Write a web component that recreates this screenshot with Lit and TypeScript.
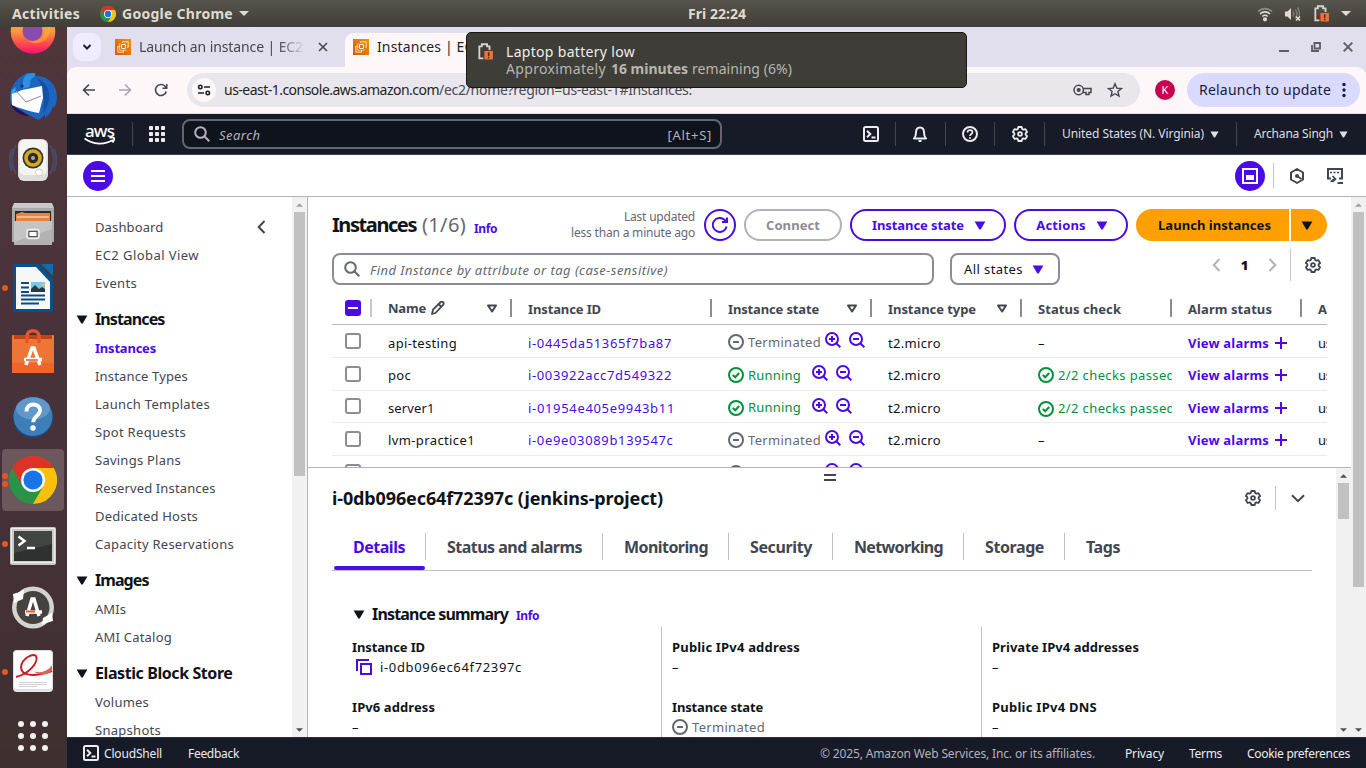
import { LitElement, html, css, svg } from 'lit';
import { customElement, property } from 'lit/decorators.js';

/** Single line of text whose tracking is adjusted so that it spans `w` pixels. */
@customElement('fit-text')
class FitText extends LitElement {
  @property({ type: Number }) w = 0;

  static styles = css`
    :host { display: inline-block; white-space: nowrap; flex: none; }
  `;

  firstUpdated() {
    const inner = this.renderRoot.querySelector('span') as HTMLElement;
    const natural = inner.getBoundingClientRect().width;
    const count = (this.textContent || '').trim().length;
    if (this.w && count) {
      this.style.width = `${this.w}px`;
      this.style.letterSpacing = `${((this.w - natural) / count).toFixed(3)}px`;
    }
  }

  render() {
    return html`<span><slot></slot></span>`;
  }
}

const t = (s: string, w: number, c = '') => html`<fit-text class=${c} .w=${w}>${s}</fit-text>`;

/* ---- shared icons (16-unit grid, 2-unit strokes) ---- */
const ico = (body: unknown, size = 16, cls = 'ic') =>
  html`<svg class=${cls} width=${size} height=${size} viewBox="0 0 16 16" fill="none" stroke="currentColor" stroke-width="2">${body}</svg>`;

const gear = svg`<path d="M6.3 1h3.4l.5 2 1.2.7 2-.6 1.7 2.9-1.5 1.4v1.3l1.5 1.4-1.7 2.9-2-.6-1.2.7-.5 1.9H6.300l-.5-1.9-1.200-.7-2 .6L.9 10.100l1.500-1.400V7.400L.9 6l1.700-2.900 2 .6L5.800 3z" stroke-linejoin="round" stroke-width="1.8"/><circle cx="8" cy="8" r="1.9" stroke-width="1.8"/>`;
const searchIc = svg`<circle cx="6.500" cy="6.500" r="5.300"/><path d="M10.500 10.500 15.300 15.300"/>`;
const zoomPlus = svg`<circle cx="7" cy="7" r="6"/><path d="M11.300 11.300 15.300 15.300M7 4v6M4 7h6"/>`;
const zoomMinus = svg`<circle cx="7" cy="7" r="6"/><path d="M11.300 11.300 15.300 15.300M4 7h6"/>`;
const minusCircle = svg`<circle cx="8" cy="8" r="7"/><path d="M5 8h6"/>`;
const okCircle = svg`<circle cx="8" cy="8" r="7"/><path d="m4.700 8 2.500 2.300 4-4.300"/>`;
const refreshIc = svg`<path d="M14.600 9.500A7 7 0 1 1 12.500 2.800L15 5M15 .5V5h-5"/>`;
const shell = svg`<rect x="1" y="1" width="14" height="14" rx="1.500"/><path d="m4 4.700 3.300 3.300L4 11.300M8.500 11.500h4"/>`;
const bell = svg`<path d="M2 12.500h12c-1.500-1.500-2-3-2-6 0-3-1.500-5-4-5s-4 2-4 5c0 3-.5 4.500-2 6zM6.500 15h3" stroke-linejoin="round"/>`;
const help = svg`<circle cx="8" cy="8" r="7"/><path d="M5.500 6.500c0-1.600 1.100-2.300 2.500-2.300s2.500.8 2.500 2.100c0 1.700-2.500 1.700-2.500 3.700M8 11v1.700" stroke-width="1.700"/>`;
const tri = (w = 12, h = 9, cls = 'tri') =>
  html`<svg class=${cls} width=${w} height=${h} viewBox="0 0 12 9"><path d="M.6.5h10.800L6.700 8.500H5.300z" fill="currentColor"/></svg>`;
const triOpen = html`<svg class="tri" width="12" height="9" viewBox="0 0 12 9"><path d="M2 1.500h8L6.100 7.500z" fill="none" stroke="currentColor" stroke-width="2" stroke-linejoin="round"/></svg>`;
const chromeLogo = (s: number) => html`<svg width=${s} height=${s} viewBox="0 0 48 48">
  <circle cx="24" cy="24" r="24" fill="#2b9348"/>
  <path d="M3.200 12A24 24 0 0 1 44.800 12L24 12.500 13.600 30z" fill="#df3227"/>
  <path d="M44.800 12A24 24 0 0 1 24 48L34.400 30 24 12z" fill="#fcc00c"/>
  <circle cx="24" cy="24" r="12" fill="#fff"/><circle cx="24" cy="24" r="9.600" fill="#1a73e8"/></svg>`;
const ec2Fav = html`<svg width="16" height="16" viewBox="0 0 16 16"><defs><linearGradient id="o" x1="0" y1="1" x2="1" y2="0"><stop offset="0" stop-color="#d05c0c"/><stop offset="1" stop-color="#f59100"/></linearGradient></defs><rect width="16" height="16" fill="url(#o)"/><g fill="none" stroke="#ffe3b8" stroke-width="1"><rect x="6.500" y="5.500" width="4" height="4" rx=".6" stroke="#fff"/><path d="M7.500 4V2.800h5.700v5.400H12M5 7.300H2.800v5.900h5.700V11"/><path d="M5.500 4.800h-.8v6.500h6.500v-.6" opacity=".75"/></g></svg>`;
const batteryIc = (s: number) => html`<svg width=${s} height=${s} viewBox="0 0 16 16"><path d="M6 14.500H2.200V3.200H4.500V1.200h5v2h2.300V6.500" fill="none" stroke="#d5d3cc" stroke-width="1.700"/><circle cx="4.800" cy="11.500" r="1" fill="#d40000"/><rect x="7" y="7.500" width="8" height="8" rx=".6" fill="#f37134"/><path d="M11 8.700v3.500M11 13v1.400" stroke="#5a2b16" stroke-width="1.500"/></svg>`;

/* ---- launcher ---- */
@customElement('launcher-dock')
class LauncherDock extends LitElement {
  static styles = css`
    :host { display: block; width: 67px; height: 741px; overflow: hidden; background: linear-gradient(#4f363b, #46313a 60%, #3f302f); flex: none; }
    .list { display: flex; flex-direction: column; margin-top: -27px; }
    .item { height: 64px; display: flex; align-items: center; }
    .dots { width: 7px; margin-left: -1px; height: 62px; display: flex; flex-direction: column; gap: 2px; justify-content: center; align-items: center; flex: none; }
    .dot { width: 6px; height: 6px; border-radius: 50%; background: #e95420; }
    .tile { width: 62px; height: 62px; margin-left: 2px; border-radius: 4px; display: flex; align-items: center; }
    .on { background: #6b575c; }
    .pic { width: 48px; height: 48px; display: block; margin-left: 1px; }
  `;

  render() {
    const i = (body: unknown, dots = 0) => html`
      <div class="item"><div class="tile">
        <div class="dots">${Array.from({ length: dots }, () => html`<i class="dot"></i>`)}</div>
        <svg class="pic" viewBox="0 0 48 48">${body}</svg>
      </div></div>`;
    return html`<div class="list">
      ${i(svg`<defs><linearGradient id="ff" x1="0" y1="0" x2="0" y2="1"><stop offset=".5" stop-color="#ff9a3c"/><stop offset=".75" stop-color="#ff4f4a"/><stop offset="1" stop-color="#f5106f"/></linearGradient></defs><circle cx="24" cy="23.500" r="22.300" fill="url(#ff)"/><circle cx="23.500" cy="23" r="10" fill="#8a4bb0"/><path d="M38 8c5 9 4 19-2 24-5 4-12 4-17 1 9 1 16-3 17-10z" fill="#ffb02e" opacity=".6"/>`)}
      ${i(svg`<path d="M1 26C1 13 9 6 15 3c3-3 8-3 11 1 12-1 22 8 22 21 0 4-1 8-3 11l-1-2c-1 5-4 9-8 12l0-4c-2 3-4 5-7 6L2 33z" fill="#1c66c2"/><path d="M14 9c1-5 4-8 10-8 3 0 3 2 1 4-5 2-3 7-5 10l-6 2z" fill="#2f8fe0"/><path d="M28 6c9 4 13 12 12 22-1 6-4 10-6 13 2-11 1-25-6-35z" fill="#1450a4"/><path d="M3 18c-2 6-1 9 0 14l4-17z" fill="#39a4ec"/><path d="M2 32l4 3 14 9c-8 0-15-4-18-12z" fill="#24105e"/><path d="M3 22l10-4 20-4 1 12-4 15C22 40 10 36 3 33z" fill="#fff"/><path d="m6 18 11 12 15-6" fill="none" stroke="#8a8a95"/><circle cx="13" cy="14" r="1.500" fill="#0b2a5e"/>`)}
      ${i(svg`<path d="M7 9c-5 9-5 20 0 29M41 9c5 9 5 20 0 29M3 13c-3 7-3 15 0 22M45 13c3 7 3 15 0 22" fill="none" stroke="#4a4a68" stroke-width="2"/><rect x="9" y="3" width="30" height="42" rx="6" fill="#dededc"/><rect x="10.500" y="4" width="27" height="35" rx="5" fill="#f4f4f3"/><circle cx="24" cy="22" r="10.500" fill="#32332f"/><circle cx="24" cy="22" r="8.800" fill="#d5ab1d"/><circle cx="24" cy="22" r="5.200" fill="#2b2b28"/><circle cx="24" cy="22" r="2" fill="#aaa"/><circle cx="30" cy="36.500" r="3.500" fill="#fff" stroke="#ccc"/>`)}
      ${i(svg`<path d="M5 3h38l2 5v34H3V8z" fill="#c9c9c9"/><path d="M3 8h42v34H3z" fill="#a9a9a9"/><rect x="6" y="11" width="36" height="10" fill="#2c2a28"/><path d="M7 14l6-2 3 1h25v8H7z" fill="#e98242"/><path d="M8 17h32" stroke="#fff2d8"/><path d="M5 21h38v24H5z" fill="#b2b2b2"/><path d="M5 21h38v8L5 42z" fill="#c4c4c4"/><rect x="18" y="29.500" width="12" height="9" rx="2" fill="#aaa" stroke="#eee" stroke-width="1.500"/><rect x="20" y="31.500" width="8" height="5" fill="#fff" stroke="#555"/>`)}
      ${i(svg`<path d="M6 0h24l14 15v31a2 2 0 0 1-2 2H6a2 2 0 0 1-2-2V2a2 2 0 0 1 2-2z" fill="#06508c"/><path d="M32 0h12v12z" fill="#0c6cad"/><path d="M7 3h20l14 15v27H7z" fill="#f7f7f5"/><path d="M12 19h8M12 23.500h8M12 28h8M12 31.500h24M12 35.500h24M12 39.500h18" stroke="#0a4d86" stroke-width="2"/><rect x="22" y="18" width="14" height="10" fill="#78c4f5"/><path d="M22 28v-3l4-4 4 4 3-2 3 2v3z" fill="#2a3b3f"/><circle cx="34" cy="20.500" r="1.600" fill="#ffc81c"/>`, 1)}
      ${i(svg`<rect x="3" y="7" width="42" height="38" rx="1" fill="#f07a3c"/><path d="M5 7h38v5H5z" fill="#c24317"/><path d="M3 11h42v24H3z" fill="#ee7536"/><path d="M3 35h42v10H3z" fill="#f0662a"/><path d="M18 15V8c0-7 12-7 12 0v7" fill="none" stroke="#e9552a" stroke-width="3.500"/><path d="M17 37l6-17h2l6 17M15 31.500h18" stroke="#fff" stroke-width="3.500" fill="none"/><path d="M17 32h12" stroke="#e95420" stroke-width="1.500"/>`)}
      ${i(svg`<circle cx="24" cy="25.500" r="20" fill="#1c4a80"/><circle cx="24" cy="24.500" r="19.500" fill="#3d7db8"/><ellipse cx="24" cy="16.500" rx="17" ry="11" fill="#6098ca"/><path d="M17.500 19.500c0-5 3-7 6.700-7 4 0 6.800 2.300 6.800 5.700 0 5.300-6.800 6-6.800 12" fill="none" stroke="#fff" stroke-width="3.800"/><circle cx="24" cy="36" r="2.700" fill="#fff"/>`)}
      <div class="item"><div class="tile on"><div class="dots"><i class="dot"></i><i class="dot"></i></div><div class="pic">${chromeLogo(48)}</div></div></div>
      ${i(svg`<rect x="1" y="7" width="46" height="38" rx="2" fill="#c9c9c7"/><rect x="2.500" y="8.500" width="43" height="34" fill="none" stroke="#efefed"/><rect x="5" y="11" width="38" height="30" fill="#2e3130"/><path d="M5 11h38v13L5 33z" fill="#414544"/><path d="m9.500 16.500 6 4.500-6 4.500M18 28h8" fill="none" stroke="#fff" stroke-width="2.500"/>`, 1)}
      ${i(svg`<circle cx="24" cy="23.500" r="21" fill="#d5d3cf"/><circle cx="24" cy="23.500" r="16.500" fill="#45423f"/><path d="M11 6l4 2-1 3 9-2-9 8-8 1-2-4z" fill="#45423f" opacity="0"/><path d="M4 10l7-2 4-2-1 9-9 4z" fill="#fff"/><path d="M44 37l-7 2-4 2 1-7 9-5z" fill="#fff"/><path d="M18 32l5-17h2l5 17M16 28h17" stroke="#fff" stroke-width="3.500" fill="none"/><path d="M17 27.500h9" stroke="#f05a20" stroke-width="2"/>`)}
      ${i(svg`<rect x="4" y="2" width="40" height="42" rx="4" fill="#e4e4e3"/><rect x="4.500" y="2.500" width="39" height="39" rx="3.500" fill="#fff" stroke="#ddd"/><path d="M7 29C20 26 30 14 27 8 24 5 13 10 12 19c0 8 10 11 31 4" fill="none" stroke="#cc1d25" stroke-width="2"/><path d="M25 23.500c7 2 13 0 18-6v5c-6 5-13 5-18 1z" fill="#e0605c"/><path d="M10 34.500h28M10 36.500h28M10 38.500h18" stroke="#cfcfcf"/>`, 1)}
      ${i(svg`${[12, 24, 36].map(y => [12, 24, 36].map(x => svg`<circle cx=${x} cy=${y} r="3" fill="#f2f1f0"/>`))}`)}
    </div>`;
  }
}

/* ---- browser chrome ---- */
@customElement('browser-top')
class BrowserTop extends LitElement {
  static styles = css`
    :host { display: block; width: 1299px; height: 87px; background: #e1dfed; color: #1f1f24; font: 14px/20px 'Noto Sans', sans-serif; flex: none; }
    svg { flex: none; }
    .tabs { height: 40px; display: flex; align-items: center; }
    .drop { width: 28px; height: 28px; border-radius: 9px; background: #eeecfe; margin-left: 6px; display: flex; align-items: center; justify-content: center; }
    .tab1 { display: flex; align-items: center; margin-left: 14px; width: 227px; gap: 8px; color: #47464f; flex: none; }
    .fade { width: 166px; overflow: hidden; white-space: nowrap; -webkit-mask-image: linear-gradient(90deg, #000 84%, transparent); mask-image: linear-gradient(90deg, #000 84%, transparent); }
    .tab1 svg:last-child { margin-left: 5px; }
    .tab2 { align-self: flex-end; height: 34px; width: 240px; background: #fdf7f9; border-radius: 9px 9px 0 0; margin-left: 3px; padding: 0 0 6px 8px; display: flex; align-items: center; gap: 8px; box-sizing: border-box; white-space: nowrap; overflow: hidden; }
    .grow { flex: 1; }
    .wins { display: flex; color: #5c5b66; gap: 22px; margin-right: 13px; align-items: center; }
    .bar { height: 47px; background: #fdf7f9; border-radius: 9px 9px 0 0; border-bottom: 1px solid #dfdce3; box-sizing: border-box; display: flex; align-items: center; }
    .nav { display: flex; gap: 20px; margin-left: 14px; color: #47464f; }
    .url { width: 953px; height: 34px; border-radius: 17px; background: #e9e7ec; margin-left: 18px; display: flex; align-items: center; box-sizing: border-box; padding: 0 17px 0 5px; color: #4b4a54; }
    .site { width: 24px; height: 24px; border-radius: 50%; background: #fdf7f9; margin-right: 8px; display: flex; align-items: center; justify-content: center; }
    .dark { color: #1f1f24; }
    .mid { margin-right: 15px; }
    .av { width: 20px; height: 20px; border-radius: 50%; background: #c9004f; color: #fff; font-size: 11px; text-align: center; margin-left: 15px; }
    .re { width: 173px; height: 34px; border-radius: 17px; background: #dadaff; margin-left: 12px; box-sizing: border-box; padding-left: 12px; display: flex; align-items: center; color: #1b1a3a; gap: 11px; }
  `;

  render() {
    return html`
      <div class="tabs">
        <div class="drop"><svg width="10" height="8" viewBox="0 0 10 8"><path d="m1.500 2 3.500 3.500L8.500 2" fill="none" stroke="#1f1f24" stroke-width="2"/></svg></div>
        <div class="tab1">${ec2Fav}<div class="fade">${t('Launch an instance | EC2', 164)}</div>
          <svg width="10" height="10" viewBox="0 0 10 10"><path d="m1 1 8 8M9 1 1 9" stroke="#47464f" stroke-width="1.600"/></svg></div>
        <div class="tab2">${ec2Fav}${t('Instances | EC2 | us-east-1', 181)}</div>
        <div class="grow"></div>
        <div class="wins">
          <svg width="10" height="12" viewBox="0 0 10 12"><path d="M0 10h10" stroke="currentColor" stroke-width="2"/></svg>
          <svg width="10" height="10" viewBox="0 0 10 10" fill="none" stroke="currentColor" stroke-width="1.800"><path d="M3.500 1h5.500v5.500H3.500zM1 3v6h7"/></svg>
          <svg width="10" height="10" viewBox="0 0 10 10"><path d="m.7.7 8.600 8.600M9.300.7.7 9.300" stroke="currentColor" stroke-width="1.900"/></svg>
        </div>
      </div>
      <div class="bar">
        <div class="nav">
          <svg width="16" height="16" viewBox="0 0 16 16" fill="none" stroke="currentColor" stroke-width="1.600"><path d="M14 8H3M8 2.500 2.500 8 8 13.500"/></svg>
          <svg width="16" height="16" viewBox="0 0 16 16" fill="none" stroke="#a9a6b0" stroke-width="1.600"><path d="M2 8h11M8 2.500 13.500 8 8 13.500"/></svg>
          <svg width="16" height="16" viewBox="0 0 16 16" fill="none" stroke="currentColor" stroke-width="1.600"><path d="M13.300 9.500A5.500 5.500 0 1 1 12 4.200L13.700 6M13.700 2v4.300H9.500"/></svg>
        </div>
        <div class="url">
          <div class="site"><svg width="14" height="12" viewBox="0 0 14 12" fill="none" stroke="#1f1f24" stroke-width="1.600"><circle cx="3.300" cy="3" r="1.700"/><path d="M7 3h6M1 9h6"/><circle cx="10.800" cy="9" r="1.700"/></svg></div>
          ${t('us-east-1.console.aws.amazon.com', 215, 'dark')}${t('/ec2/home?region=us-east-1#Instances:', 253)}
          <div class="grow"></div>
          <svg class="mid" width="19" height="12" viewBox="0 0 19 12" fill="none" stroke="#47464f" stroke-width="1.500"><circle cx="5.700" cy="6" r="4.700"/><circle cx="5.700" cy="6" r="1.300" fill="#47464f"/><path d="M10.200 4.500H18v4h-2v2h-3v-2h-3"/></svg>
          <svg width="16" height="16" viewBox="0 0 16 16"><path d="m8 1.800 1.800 4.300 4.700.4-3.600 3 1.100 4.600L8 11.700l-4 2.400 1.100-4.600-3.600-3 4.700-.4z" fill="none" stroke="#47464f" stroke-width="1.400"/></svg>
        </div>
        <div class="av">K</div>
        <div class="re">${t('Relaunch to update', 132)}<svg width="4" height="16" viewBox="0 0 4 16" fill="#1b1a3a"><circle cx="2" cy="2.500" r="1.700"/><circle cx="2" cy="8" r="1.700"/><circle cx="2" cy="13.500" r="1.700"/></svg></div>
      </div>`;
  }
}

/* ---- AWS header + tool strip ---- */
@customElement('aws-header')
class AwsHeader extends LitElement {
  static styles = css`
    :host { display: block; flex: none; font: 12px/20px 'Noto Sans', sans-serif; }
    svg { display: block; flex: none; }
    .top { height: 41px; box-sizing: border-box; border-bottom: 1px solid #424453; background: #161b27; display: flex; align-items: center; color: #ebebf0; padding-left: 16px; }
    .logo { width: 33px; display: flex; flex-direction: column; align-items: center; }
    .word { font-size: 17px; line-height: 13px; font-weight: 500; color: #fff; }
    .v { width: 1px; height: 24px; background: #424453; flex: none; }
    .v1 { margin: 0 16px; }
    .find { width: 540px; height: 30px; box-sizing: border-box; border: 2px solid #656471; border-radius: 8px; background: #0f131b; margin-left: 17px; display: flex; align-items: center; padding: 1px 8px 0 10px; color: #b4b1bd; font-size: 13px; flex: none; }
    .find i { margin-left: 9px; }
    .find svg { margin-top: -1px; }
    .grow { flex: 1; }
    .cell { width: 48.700px; display: flex; justify-content: center; flex: none; }
    .c1 { margin-left: 124.300px; }
    .link { display: flex; align-items: center; gap: 6px; margin-left: 17px; color: #dedee3; }
    .sep { margin-left: 17px; }
    .strip { height: 42px; box-sizing: border-box; border-bottom: 1px solid #b5b2be; background: #fff; display: flex; align-items: center; padding-left: 16px; color: #424453; }
    .round { width: 30px; height: 30px; border-radius: 50%; background: #4a0be6; display: flex; align-items: center; justify-content: center; color: #fff; }
    .v2 { width: 1px; height: 25px; background: #c4c2cc; margin: 0 15px 0 8px; }
    .hex { margin-right: 22px; }
    .term { margin-right: 23px; }
  `;

  render() {
    return html`
      <div class="top">
        <div class="logo">${t('aws', 29, 'word')}
          <svg width="33" height="8" viewBox="0 0 33 8"><path d="M1.500 1.500c9 6.500 20 6.500 28.500 1.500M26.500 1c2-.7 4-.7 4.500 0s-.3 3-1.500 4.500" fill="none" stroke="#fff" stroke-width="1.700"/></svg></div>
        <div class="v v1"></div>
        <svg width="16" height="16" viewBox="0 0 16 16" fill="currentColor">${[0, 6, 12].map(y => [0, 6, 12].map(x => svg`<rect x=${x} y=${y} width="4" height="4" rx=".7"/>`))}</svg>
        <div class="find">${ico(searchIc)}<i>${t('Search', 41.5)}</i><div class="grow"></div>${t('[Alt+S]', 44.5)}</div>
        <div class="cell c1">${ico(shell)}</div><div class="v"></div>
        <div class="cell">${ico(bell)}</div><div class="v"></div>
        <div class="cell">${ico(help)}</div><div class="v"></div>
        <div class="cell">${ico(gear)}</div><div class="v"></div>
        <div class="link">${t('United States (N. Virginia)', 142)}${tri(9, 7)}</div>
        <div class="v sep"></div>
        <div class="link">${t('Archana Singh', 79)}${tri(9, 7)}</div>
      </div>
      <div class="strip">
        <div class="round"><svg width="14" height="12" viewBox="0 0 14 12"><path d="M0 1h14M0 6h14M0 11h14" stroke="#fff" stroke-width="2"/></svg></div>
        <div class="grow"></div>
        <div class="round">${ico(svg`<rect x="1" y="1" width="14" height="14"/><rect x="4" y="7" width="8" height="5" fill="currentColor" stroke="none"/>`)}</div>
        <div class="v2"></div>
        <svg class="hex" width="16" height="16" viewBox="0 0 16 16" fill="none" stroke="currentColor" stroke-width="2"><path d="m8 1 6 3.500v7L8 15l-6-3.500v-7z" stroke-linejoin="round"/><path d="M8 8l4.500 3" stroke-width="1.700"/><circle cx="8" cy="8" r="2" fill="currentColor" stroke="none"/></svg>
        <svg class="term" width="16" height="16" viewBox="0 0 16 16" fill="none" stroke="currentColor" stroke-width="2"><path d="M4 10.500H1V1h14v9.500h-3"/><path d="M3 4.500h2M6.500 4.500h2M10 4.500h2" stroke-width="1.700"/><path d="M3.500 13.500C5.500 13.500 5 11 8 11M5.500 8 8.500 11 5.500 14" stroke-width="1.700"/><path d="M10.500 15H16"/></svg>
      </div>`;
  }
}

/* ---- sidebar ---- */
@customElement('side-nav')
class SideNav extends LitElement {
  static styles = css`
    :host { display: flex; width: 241px; box-sizing: border-box; border-right: 1px solid #b5b2be; background: #fff; overflow: hidden; flex: none; font: 13px/20px 'Noto Sans', sans-serif; color: #424650; }
    .list { flex: 1; padding-top: 16px; }
    .row { height: 28px; display: flex; align-items: center; padding-left: 28px; }
    .head { height: 30px; padding-top: 7px; display: flex; align-items: center; padding-left: 9px; gap: 7px; color: #0f141a; font-size: 16px; font-weight: 700; }
    .on { color: #4a0be6; font-weight: 700; }
    .chev { margin-left: auto; margin-right: 26px; }
  `;

  render() {
    const r = (s: string, w: number, on = false) => html`<div class="row ${on ? 'on' : ''}">${t(s, w)}</div>`;
    const h = (s: string, w: number) => html`<div class="head">${tri(12, 9)}${t(s, w)}</div>`;
    return html`<div class="list">
        <div class="row">${t('Dashboard', 68.5)}<svg class="chev" width="9" height="14" viewBox="0 0 9 14"><path d="M7.500 1 1.700 7l5.800 6" fill="none" stroke="#424453" stroke-width="2"/></svg></div>
        ${r('EC2 Global View', 104)}${r('Events', 42)}
        ${h('Instances', 69.5)}
        ${r('Instances', 61, true)}${r('Instance Types', 93)}${r('Launch Templates', 115)}${r('Spot Requests', 91)}${r('Savings Plans', 86)}${r('Reserved Instances', 120.5)}${r('Dedicated Hosts', 103)}${r('Capacity Reservations', 139)}
        ${h('Images', 53.5)}${r('AMIs', 31)}${r('AMI Catalog', 77)}
        ${h('Elastic Block Store', 137.5)}${r('Volumes', 54)}${r('Snapshots', 66)}
      </div><scroll-bar .thumb=${264} .up=${'#a3a3a3'} .down=${'#505050'}></scroll-bar>`;
  }
}

@customElement('scroll-bar')
class ScrollBar extends LitElement {
  @property({ type: Number }) thumb = 100;
  @property() up = '#a3a3a3';
  @property() down = '#505050';

  static styles = css`
    :host { display: flex; flex-direction: column; width: 15px; background: #f1f1f1; align-items: center; flex: none; overflow: hidden; }
    .end { height: 15px; flex: none; display: flex; align-items: center; }
    .thumb { width: 11px; background: #c1c1c1; flex: none; }
    .grow { flex: 1; }
  `;

  render() {
    return html`
      <div class="end"><svg width="7" height="4" viewBox="0 0 8 4"><path d="M0 4 4 0l4 4z" fill=${this.up}/></svg></div>
      <div class="thumb" style="height:${this.thumb}px"></div><div class="grow"></div>
      <div class="end"><svg width="7" height="4" viewBox="0 0 8 4"><path d="M0 0h8L4 4z" fill=${this.down}/></svg></div>`;
  }
}

/* ---- instances table ---- */
@customElement('instances-pane')
class InstancesPane extends LitElement {
  static styles = css`
    :host { display: block; height: 270px; overflow: hidden; padding: 12px 24px 0; box-sizing: border-box; background: #fff; flex: none; font: 13px/20px 'Noto Sans', sans-serif; color: #0f141a; }
    svg { display: block; flex: none; }
    .bar { display: flex; height: 32px; align-items: center; width: 995px; }
    .h1 { font-size: 20px; font-weight: 700; }
    .n { font-size: 20px; color: #656871; margin-left: 6px; }
    .info { font-size: 12px; font-weight: 700; color: #4a0be6; margin: 7px 0 0 8px; }
    .upd { margin-left: auto; font-size: 12px; line-height: 16px; color: #656871; display: flex; flex-direction: column; align-items: flex-end; margin-right: 9px; }
    .btn { height: 32px; box-sizing: border-box; border: 2px solid #4a0be6; border-radius: 16px; color: #4a0be6; font-weight: 700; display: flex; align-items: center; justify-content: center; gap: 10px; margin-right: 8px; }
    .ref { width: 32px; }
    .con { width: 98px; border-color: #b4b1bb; color: #8c8c94; }
    .sta { width: 156px; padding-left: 2px; }
    .act { width: 114px; padding-left: 2px; }
    .launch { width: 153px; border: 0; border-radius: 16px 0 0 16px; background: #ffa000; color: #0f141a; margin-right: 2px; padding-left: 4px; }
    .more { width: 36px; border: 0; border-radius: 0 16px 16px 0; background: #ffa000; color: #0f141a; margin-right: 0; padding-right: 4px; }
    .tools { margin-top: 12px; }
    .find { width: 602px; height: 32px; box-sizing: border-box; border: 2px solid #8c8c94; border-radius: 8px; display: flex; align-items: center; padding-left: 10px; gap: 10px; color: #656871; font-style: italic; }
    .find fit-text { margin-top: 2px; }
    .sel { width: 110px; height: 32px; box-sizing: border-box; border: 2px solid #8c8c94; border-radius: 8px; margin-left: 16px; display: flex; align-items: center; gap: 9px; padding-left: 12px; }
    .sel .tri { color: #4a0be6; }
    .pg { margin-left: auto; display: flex; align-items: center; align-self: flex-start; height: 32px; margin-top: -4px; font-weight: 700; }
    .pg b { width: 47px; text-align: center; }
    .pv { width: 1px; height: 32px; background: #c6c6cd; margin: 0 14px 0 13px; }
    .pg .gear { margin-right: 6px; color: #424453; }
    .table { width: 995px; overflow: hidden; margin-top: 7px; }
    .row, .thead { display: grid; grid-template-columns: 40px 140px 200px 160px 150px 150px 130px 25px; width: 995px; box-sizing: border-box; }
    .thead { height: 33px; border-bottom: 1px solid #b9b8c2; color: #424650; font-weight: 700; align-items: center; }
    .th { height: 18px; border-right: 2px solid #8c8c94; display: flex; align-items: center; padding-left: 16px; overflow: hidden; }
    .th fit-text { margin-top: 2px; }
    .th .tri { margin-left: auto; margin-right: 12px; margin-top: 1px; }
    .th.name fit-text { margin-top: 0; }
    .th.box { padding-left: 13px; border-color: #c6c6cd; }
    .th.last { border: 0; }
    .pen { margin-left: 5px; }
    .row { height: 33px; border-bottom: 1px solid #ebebf0; }
    .row.short { height: 32px; }
    .td { display: flex; align-items: center; padding-left: 16px; overflow: hidden; padding-top: 3px; }
    .even .td { padding-top: 1px; }
    .row .td.sq { padding-left: 13px; padding-top: 0; }
    .short .cb { margin-top: -2px; }
    .cb { width: 12px; height: 12px; border: 2px solid #8c8c94; border-radius: 3px; }
    .id { color: #4a0be6; }
    .row .st { padding-top: 1px; }
    .st fit-text, .ok fit-text { margin-left: 4px; }
    .term { color: #656871; }
    .run { color: #00913a; }
    .term svg, .run svg { margin-top: 1px; }
    .z { color: #4a0be6; display: flex; gap: 8px; margin: -3px 0 0 4px; }
    .zr { margin-left: 11px; }
    .grp { display: flex; align-items: center; }
    .va { color: #4a0be6; font-weight: 700; gap: 6px; }
    .mb { width: 16px; height: 16px; border-radius: 3px; background: #4a0be6; display: flex; align-items: center; justify-content: center; }
    .mb i { width: 10px; height: 2px; background: #fff; }
  `;

  rows: [string, number, string, number, boolean][] = [
    ['api-testing', 69, 'i-0445da51365f7ba87', 144, false],
    ['poc', 23, 'i-003922acc7d549322', 144, true],
    ['server1', 46.5, 'i-01954e405e9943b11', 147, true],
    ['lvm-practice1', 87, 'i-0e9e03089b139547c', 145.5, false],
    ['jenkins-project', 95, 'i-0db096ec64f72397c', 142, false],
  ];

  render() {
    return html`
      <div class="bar">
        ${t('Instances', 84, 'h1')}${t('(1/6)', 44, 'n')}${t('Info', 23, 'info')}
        <div class="upd">${t('Last updated', 71)}${t('less than a minute ago', 124)}</div>
        <div class="btn ref">${ico(refreshIc)}</div>
        <div class="btn con">${t('Connect', 54)}</div>
        <div class="btn sta">${t('Instance state', 92)}${tri()}</div>
        <div class="btn act">${t('Actions', 49.5)}${tri()}</div>
        <div class="btn launch">${t('Launch instances', 113)}</div>
        <div class="btn more">${tri()}</div>
      </div>
      <div class="bar tools">
        <div class="find">${ico(searchIc)}${t('Find Instance by attribute or tag (case-sensitive)', 298)}</div>
        <div class="sel">${t('All states', 59)}${tri()}</div>
        <div class="pg">
          <svg width="9" height="14" viewBox="0 0 9 14"><path d="M7.500 1 1.700 7l5.800 6" fill="none" stroke="#b4b1bb" stroke-width="2"/></svg>
          <b>1</b>
          <svg width="9" height="14" viewBox="0 0 9 14"><path d="m1.500 1 5.800 6-5.800 6" fill="none" stroke="#b4b1bb" stroke-width="2"/></svg>
          <div class="pv"></div><div class="gear">${ico(gear)}</div>
        </div>
      </div>
      <div class="table">
        <div class="thead">
          <div class="th box"><div class="mb"><i></i></div></div>
          <div class="th name">${t('Name', 38)}<svg class="pen" width="14" height="14" viewBox="0 0 14 14"><path d="M1 13l1-4.300L9.700 1a1.500 1.500 0 0 1 2 0l.6.6a1.500 1.500 0 0 1 0 2L4.500 12zM7.700 3.200l2.800 2.800" fill="none" stroke="currentColor" stroke-width="1.800" stroke-linejoin="round"/></svg>${triOpen}</div>
          <div class="th">${t('Instance ID', 73)}</div>
          <div class="th">${t('Instance state', 91)}${triOpen}</div>
          <div class="th">${t('Instance type', 88)}${triOpen}</div>
          <div class="th">${t('Status check', 83)}</div>
          <div class="th">${t('Alarm status', 84)}</div>
          <div class="th last">${t('Availability Zone', 115)}</div>
        </div>
        ${this.rows.map(([n, nw, id, iw, run], k) => html`
          <div class="row ${k === 2 ? 'short' : ''} ${k % 2 ? 'even' : ''}">
            <div class="td sq"><div class="cb"></div></div>
            <div class="td">${t(n, nw)}</div>
            <div class="td id">${t(id, iw)}</div>
            <div class="td st"><div class="grp ${run ? 'run' : 'term'}">${ico(run ? okCircle : minusCircle)}${run ? t('Running', 53) : t('Terminated', 73)}</div><div class="z ${run ? 'zr' : ''}">${ico(zoomPlus)}${ico(zoomMinus)}</div></div>
            <div class="td">${t('t2.micro', 53)}</div>
            <div class="td ok ${run ? 'run' : ''}">${run ? html`${ico(okCircle)}${t('2/2 checks passed', 117)}` : '–'}</div>
            <div class="td va">${t('View alarms', 81)}<svg width="12" height="12" viewBox="0 0 12 12"><path d="M6 0v12M0 6h12" stroke="currentColor" stroke-width="2"/></svg></div>
            <div class="td">${t('us-east-1b', 60)}</div>
          </div>`)}
      </div>`;
  }
}

/* ---- split panel ---- */
@customElement('detail-panel')
class DetailPanel extends LitElement {
  static styles = css`
    :host { display: flex; flex: 1; min-height: 0; border-top: 1px solid #b5b2be; background: #fff; font: 13px/20px 'Noto Sans', sans-serif; color: #0f141a; overflow: hidden; }
    svg { display: block; flex: none; }
    .body { width: 1028px; box-sizing: border-box; padding-left: 24px; }
    .grip { width: 12px; border: solid #424453; border-width: 2px 0; box-sizing: border-box; margin: 6px 0 0 492px; height: 7px; }
    .top { display: flex; align-items: center; height: 24px; margin-top: 5px; }
    .title { font-size: 18px; font-weight: 700; }
    .acts { margin-left: auto; display: flex; align-items: center; color: #424453; margin-right: 31px; }
    .v { width: 1px; height: 24px; background: #c6c6cd; margin: 0 15px 0 14px; }
    .tabs { display: flex; width: 980px; border-bottom: 1px solid #c0bfc9; height: 46px; margin-top: 15px; align-items: flex-start; padding-top: 8px; box-sizing: border-box; font-size: 16px; font-weight: 700; color: #424650; }
    .tab { height: 27px; display: flex; align-items: center; padding: 0 20px 0 21px; border-right: 1px solid #c0bfc9; }
    .tab:last-child { border: 0; }
    .first { margin-left: 2px; flex-direction: column; align-items: stretch; border: 0; padding: 0; color: #4a0be6; height: 38px; }
    .first .lab { border-right: 1px solid #c0bfc9; height: 27px; padding: 0 20px 0 19px; display: flex; align-items: center; }
    .line { height: 4px; width: 91px; background: #4a0be6; border-radius: 2px; margin-top: 6px; }
    .sum { display: flex; align-items: center; height: 24px; margin: 31px 0 0 21px; font-size: 16px; font-weight: 700; gap: 7px; }
    .info { font-size: 12px; color: #4a0be6; margin: 3px 0 0 1px; }
    .cols { display: flex; margin: 1px 0 0 20px; height: 120px; }
    .col { width: 309px; padding-top: 10px; border-right: 1px solid #c0bfc9; box-sizing: content-box; flex: none; }
    .col + .col { padding-left: 10px; }
    .col:last-child { border: 0; }
    .k { font-weight: 700; height: 20px; }
    .val { height: 20px; margin-bottom: 20px; display: flex; align-items: center; }
    .copy { color: #4a0be6; margin: 0 8px 0 4px; }
    .gr { color: #656871; gap: 4px; }
  `;

  render() {
    const tab = (s: string, w: number) => html`<div class="tab">${t(s, w)}</div>`;
    const dash = html`<div class="val">–</div>`;
    return html`
      <div class="body">
        <div class="grip"></div>
        <div class="top">${t('i-0db096ec64f72397c (jenkins-project)', 331, 'title')}
          <div class="acts">${ico(gear)}<div class="v"></div><svg width="14" height="9" viewBox="0 0 14 9"><path d="m1 1.200 6 6 6-6" fill="none" stroke="currentColor" stroke-width="2"/></svg></div>
        </div>
        <div class="tabs">
          <div class="tab first"><div class="lab">${t('Details', 52)}</div><div class="line"></div></div>
          ${tab('Status and alarms', 135)}${tab('Monitoring', 84)}${tab('Security', 62)}${tab('Networking', 89)}${tab('Storage', 59)}${tab('Tags', 34)}
        </div>
        <div class="sum">${tri(12, 9)}${t('Instance summary', 136)}${t('Info', 23, 'info')}</div>
        <div class="cols">
          <div class="col"><div class="k">${t('Instance ID', 73)}</div>
            <div class="val"><svg class="copy" width="16" height="16" viewBox="0 0 16 16" fill="none" stroke="currentColor" stroke-width="2"><path d="M1 12V1h12M5 5h10v10H5z"/></svg>${t('i-0db096ec64f72397c', 142)}</div>
            <div class="k">${t('IPv6 address', 83)}</div>${dash}</div>
          <div class="col"><div class="k">${t('Public IPv4 address', 128)}</div>${dash}
            <div class="k">${t('Instance state', 91)}</div><div class="val gr">${ico(minusCircle)}${t('Terminated', 73)}</div></div>
          <div class="col"><div class="k">${t('Private IPv4 addresses', 147)}</div>${dash}
            <div class="k">${t('Public IPv4 DNS', 105)}</div>${dash}</div>
        </div>
      </div>
      <scroll-bar .thumb=${36} .up=${'#505050'} .down=${'#505050'}></scroll-bar>`;
  }
}

/* ---- desktop ---- */
@customElement('app-root')
class AppRoot extends LitElement {
  static styles = css`
    :host { display: block; width: 1366px; height: 768px; overflow: hidden; position: relative; font-family: 'Noto Sans', sans-serif; background: #fff; }
    svg { display: block; flex: none; }
    .gnome { height: 27px; background: linear-gradient(#57544c, #403e38); color: #dfdbd2; font: bold 14px/27px 'Noto Sans', sans-serif; display: grid; grid-template-columns: 688px 58px 1fr; }
    .left, .right { display: flex; align-items: center; }
    .left { padding-left: 12px; }
    .left > svg { margin: 0 6px 0 20px; }
    .left > .tri { margin: 0 0 0 6px; }
    .right { justify-content: flex-end; padding-right: 15px; gap: 11px; }
    .desk { display: flex; height: 741px; }
    .win { display: flex; flex-direction: column; width: 1299px; }
    .page { display: flex; height: 540px; }
    .main { display: flex; flex-direction: column; width: 1043px; min-height: 0; }
    .foot { height: 31px; background: #161b27; color: #ebebf0; font-size: 12px; display: flex; align-items: center; padding: 0 16px; box-sizing: border-box; border-top: 1px solid #2a303d; }
    .foot .cs { margin: 0 26px 0 5px; }
    .foot .copy { margin-left: auto; color: #b4b1bd; margin-right: 30px; }
    .foot .p { margin-right: 25px; }
    .foot .tm { margin-right: 25px; }
    .note { position: absolute; left: 466px; top: 32px; width: 501px; height: 56px; box-sizing: border-box; background: #3f3d38; border: 1px solid #191916; border-radius: 5px; color: #eeeeec; font-size: 14px; line-height: 17px; display: flex; padding: 10px 0 0 10px; gap: 12px; }
    .sub { color: #b9b6ad; display: flex; }
    .bd { font-weight: 700; margin: 0 4px 0 5px; }
  `;

  render() {
    return html`
      <div class="gnome">
        <div class="left">${t('Activities', 68)}${chromeLogo(16)}${t('Google Chrome', 111)}<svg class="tri" width="10" height="5" viewBox="0 0 10 5"><path d="M0 0h10L5 5z" fill="#dfdbd2"/></svg></div>
        <div>${t('Fri 22:24', 58)}</div>
        <div class="right">
          <svg width="16" height="16" viewBox="0 0 16 16" fill="none" stroke="#dfdbd2" stroke-width="1.600"><path d="M1 5.500a10 10 0 0 1 14 0" opacity=".45"/><path d="M3 8a7 7 0 0 1 10 0M5.300 10.500a4 4 0 0 1 5.400 0"/><circle cx="8" cy="13.300" r="1.300" fill="#dfdbd2"/></svg>
          <svg width="18" height="16" viewBox="0 0 18 16" fill="none" stroke="#dfdbd2" stroke-width="1.400"><path d="M1 5.500h2.500L7 2v12l-3.500-3.500H1z" fill="#dfdbd2" stroke="none"/><path d="M9 5.500c1 1.500 1 3.500 0 5M11.300 3.500c2 2.500 2 6 0 9M13.500 1.500c2 3 2.500 6 1.500 9" opacity=".35"/><path d="m12 10.500 4 4M16 10.500l-4 4" stroke-width="1.700"/></svg>
          ${batteryIc(17)}
          <svg width="10" height="5" viewBox="0 0 10 5"><path d="M0 0h10L5 5z" fill="#dfdbd2"/></svg>
        </div>
      </div>
      <div class="desk">
        <launcher-dock></launcher-dock>
        <div class="win">
          <browser-top></browser-top>
          <aws-header></aws-header>
          <div class="page">
            <side-nav></side-nav>
            <div class="main"><instances-pane></instances-pane><detail-panel></detail-panel></div>
            <scroll-bar .thumb=${375} .up=${'#a3a3a3'} .down=${'#505050'}></scroll-bar>
          </div>
          <div class="foot">${ico(shell)}${t('CloudShell', 58, 'cs')}${t('Feedback', 51)}
            ${t('© 2025, Amazon Web Services, Inc. or its affiliates.', 275, 'copy')}${t('Privacy', 39, 'p')}${t('Terms', 33, 'tm')}${t('Cookie preferences', 103)}</div>
        </div>
      </div>
      <div class="note">${batteryIc(17)}
        <div>${t('Laptop battery low', 129)}<div class="sub">${t('Approximately', 100)}${t('16 minutes', 77, 'bd')}${t('remaining (6%)', 100)}</div></div>
      </div>`;
  }
}
